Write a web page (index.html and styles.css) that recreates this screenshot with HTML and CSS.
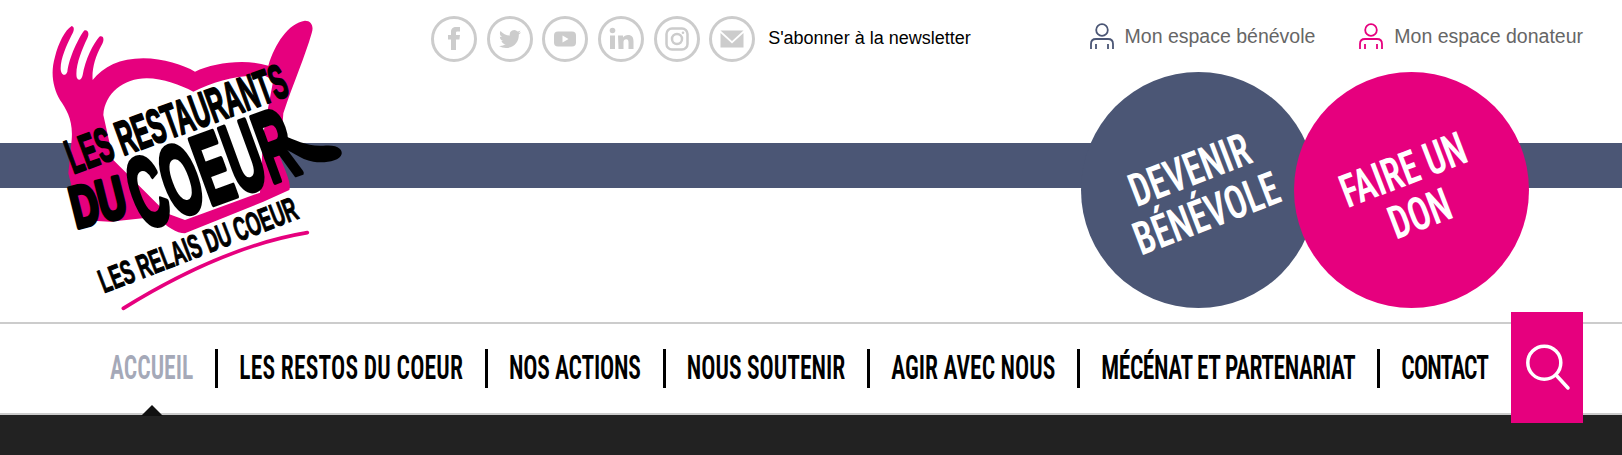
FILE: index.html
```html
<!DOCTYPE html>
<html lang="fr">
<head>
<meta charset="utf-8">
<title>Les Restaurants du Coeur</title>
<link rel="stylesheet" href="styles.css">
</head>
<body>
<div class="page">
  <header class="head">
    <div class="top">
      <div class="social">
        <a class="soc"><svg viewBox="0 0 46 46"><circle class="ring" cx="23" cy="23" r="21.5"/><path class="g" d="M20 34V23.5h-3V19h3v-3c0-3.5 2-5 5-5h4v4.5h-2.500c-1.300 0-1.500.5-1.500 1.500v2h4l-.6 4.500H25V34z"/></svg></a>
        <a class="soc"><svg viewBox="0 0 46 46"><circle class="ring" cx="23" cy="23" r="21.5"/><path class="g" transform="translate(12 12) scale(.92)" d="M23.953 4.57a10 10 0 01-2.825.775 4.958 4.958 0 002.163-2.723c-.951.555-2.005.959-3.127 1.184a4.92 4.92 0 00-8.384 4.482C7.69 8.095 4.067 6.13 1.64 3.162a4.822 4.822 0 00-.666 2.475c0 1.71.87 3.213 2.188 4.096a4.904 4.904 0 01-2.228-.616v.06a4.923 4.923 0 003.946 4.827 4.996 4.996 0 01-2.212.085 4.936 4.936 0 004.604 3.417 9.867 9.867 0 01-6.102 2.105c-.39 0-.779-.023-1.17-.067a13.995 13.995 0 007.557 2.209c9.053 0 13.998-7.496 13.998-13.985 0-.21 0-.42-.015-.63A9.935 9.935 0 0024 4.59z"/></svg></a>
        <a class="soc"><svg viewBox="0 0 46 46"><circle class="ring" cx="23" cy="23" r="21.5"/><rect class="g" x="12" y="15.500" width="22" height="15" rx="4"/><path class="w" d="M20.500 19.500v7l6-3.500z"/></svg></a>
        <a class="soc"><svg viewBox="0 0 46 46"><circle class="ring" cx="23" cy="23" r="21.500"/><circle class="g" cx="14.500" cy="14.500" r="2.800"/><path class="g" d="M12 19.500h5V33h-5zM20 19.500h5v2c1-1.500 2.800-2.400 5-2.400 4 0 5.500 2.400 5.500 6.400V33h-5v-6.700c0-1.900-.7-3-2.300-3-1.800 0-2.700 1.200-2.700 3V33h-5z"/></svg></a>
        <a class="soc"><svg viewBox="0 0 46 46"><circle class="ring" cx="23" cy="23" r="21.500"/><rect class="ln" x="12.500" y="12.500" width="21" height="21" rx="5.500"/><circle class="ln" cx="23" cy="23" r="5"/><circle class="g" cx="29" cy="16.800" r="1.300"/></svg></a>
        <a class="soc"><svg viewBox="0 0 46 46"><circle class="ring" cx="23" cy="23" r="21.500"/><path class="g" d="M11.500 14.500h23L23 25zM11.500 17V31.500h23V17L23 27.500z"/></svg></a>
        <a class="news">S'abonner à la newsletter</a>
      </div>
      <div class="accounts">
        <a class="acc"><svg class="pers blue" viewBox="0 0 24 26"><circle cx="12" cy="7" r="5.800"/><path d="M1 26v-5c0-3 2-5 5-5h12c3 0 5 2 5 5v5M6 21v5M18 21v5"/></svg>Mon espace bénévole</a>
        <a class="acc"><svg class="pers pink" viewBox="0 0 24 26"><circle cx="12" cy="7" r="5.800"/><path d="M1 26v-5c0-3 2-5 5-5h12c3 0 5 2 5 5v5M6 21v5M18 21v5"/></svg>Mon espace donateur</a>
      </div>
    </div>
    <div class="bar"></div>
    <div class="spacer"></div>

    <svg class="logo" viewBox="0 0 360 320" aria-label="Les Restaurants du Coeur">
      <g transform="translate(30 0) scale(.33333)">
        <path class="lp" d="M125 78C135 80 132 95 125 105C110 135 92 175 92 205C92 225 105 232 112 215C118 170 145 115 162 92C172 88 180 98 172 115C155 150 135 200 140 232C145 245 155 240 158 225C165 180 190 130 208 110C220 105 225 118 215 135C195 170 185 210 188 240C220 200 270 175 340 175C400 175 460 195 495 215C550 190 640 175 715 197C735 130 775 70 825 62C845 62 852 80 845 100C825 170 790 250 760 340L750 470C765 510 785 550 778 570L700 605L465 700C440 700 410 680 380 650L240 665L150 660L115 520L125 420C130 360 110 330 90 300C70 265 60 220 75 170C85 130 105 90 125 78Z"/>
        <path class="lw" d="M220 345C225 280 280 235 350 235C400 235 450 255 490 275C550 245 620 225 700 225L730 240L700 400L690 578L465 660L410 640L250 480Z"/>
        <path class="blob" d="M755 405C800 420 830 440 880 437C925 432 938 450 935 462C930 485 880 490 850 485C810 478 780 450 750 440Z"/>
        <path class="swoosh" d="M280 925C450 820 640 730 832 698"/>
        <text class="lt l1" transform="translate(130 522) rotate(-20)" textLength="695" lengthAdjust="spacingAndGlyphs">LES RESTAURANTS</text>
        <text class="lt l2" transform="translate(138 685) rotate(-14)" textLength="165" lengthAdjust="spacingAndGlyphs">DU</text>
        <text class="lt l3" transform="translate(340 690) rotate(-20)" textLength="510" lengthAdjust="spacingAndGlyphs">COEUR</text>
        <text class="lt l4" transform="translate(222 880) rotate(-21)" textLength="630" lengthAdjust="spacingAndGlyphs">LES RELAIS DU COEUR</text>
      </g>
    </svg>

    <div class="cta">
      <a class="disc d-blue"><span class="tilt">DEVENIR<br>BÉNÉVOLE</span></a>
      <a class="disc d-pink"><span class="tilt">FAIRE UN<br>DON</span></a>
    </div>
  </header>

  <nav class="nav">
    <a class="item active"><span class="lab">ACCUEIL</span></a>
    <a class="item"><span class="lab ls-a">LES RESTOS DU COEUR</span></a>
    <a class="item"><span class="lab ls-b">NOS ACTIONS</span></a>
    <a class="item"><span class="lab">NOUS SOUTENIR</span></a>
    <a class="item"><span class="lab">AGIR AVEC NOUS</span></a>
    <a class="item"><span class="lab ls-c">MÉCÉNAT ET PARTENARIAT</span></a>
    <a class="item"><span class="lab ls-d">CONTACT</span></a>
    <button class="search" aria-label="Rechercher"><svg viewBox="0 0 72 111"><circle cx="33.300" cy="50.700" r="16.500"/><path d="M45 63l12 13"/></svg></button>
  </nav>
  <div class="foot"></div>
</div>
</body>
</html>
```
FILE: styles.css
```css
* { box-sizing: border-box; }
html, body { margin: 0; padding: 0; }
body { font-family: "Liberation Sans", Arial, sans-serif; background: #fff; overflow: hidden; }
.page { width: 1622px; height: 455px; overflow: hidden; }
.head { position: relative; height: 322px; }
.top { height: 143px; display: flex; align-items: flex-start; justify-content: space-between; padding: 16px 39px 0 431px; }
.social { display: flex; align-items: center; gap: 10.700px; }
.soc { display: block; width: 45px; height: 46px; }
.soc svg { display: block; width: 46px; height: 46px; }
.ring { fill: none; stroke: #ccc; stroke-width: 3; }
.g { fill: #ccc; }
.w { fill: #fff; }
.ln { fill: none; stroke: #ccc; stroke-width: 2.500; }
.news { font-size: 18px; color: #000; margin: -2px 0 0 3px; white-space: nowrap; }
.accounts { display: flex; gap: 44px; padding-top: 7px; }
.acc { display: flex; align-items: center; gap: 11px; font-size: 19.500px; color: #666; white-space: nowrap; line-height: 26px; }
.pers { width: 24px; height: 26px; fill: none; stroke-width: 1.800; }
.pers.blue { stroke: #4b5675; }
.pers.pink { stroke: #e6007e; }
.bar { height: 45px; background: #4b5675; }
.spacer { height: 134px; }
.logo { position: absolute; left: 0; top: 0; width: 360px; height: 320px; overflow: visible; }
.lp { fill: #e6007e; }
.lw { fill: #fff; }
.blob { fill: #000; }
.swoosh { fill: none; stroke: #e6007e; stroke-width: 11; stroke-linecap: round; }
.lt { font-family: "Liberation Sans", sans-serif; font-weight: 700; fill: #000; stroke: #000; stroke-linejoin: round; }
.l1 { font-size: 145px; stroke-width: 6; }
.l2 { font-size: 175px; stroke-width: 14; }
.l3 { font-size: 300px; stroke-width: 16; }
.l4 { font-size: 100px; stroke-width: 3; }
.cta { position: absolute; right: 93px; top: 72px; display: flex; }
.disc { width: 235px; height: 236px; border-radius: 50%; display: flex; align-items: center; justify-content: center; padding-top: 3px; color: #fff; font-family: "Roboto Condensed", "Open Sans", sans-serif; font-stretch: 75%; font-weight: 600; font-size: 35.500px; line-height: 36px; text-align: center; }
.d-blue { background: #4b5675; }
.d-pink { background: #e6007e; margin-left: -22px; position: relative; }
.tilt { display: block; transform: rotate(-21deg) scaleY(1.300); white-space: nowrap; }
.nav { position: relative; height: 93px; border-top: 2px solid #ccc; border-bottom: 2px solid #ccc; display: flex; align-items: center; padding: 0 0 0 88px; }
.item { position: relative; font-family: "Roboto Condensed", "Open Sans", sans-serif; font-stretch: 75%; font-weight: 600; font-size: 23.600px; line-height: 39px; height: 39px; padding: 0 22px 0 21px; border-left: 3px solid #000; color: #000; white-space: nowrap; }
.lab { display: block; transform: scaleY(1.400); }
.ls-a { letter-spacing: .17px; }
.ls-b { letter-spacing: -.2px; }
.ls-c { letter-spacing: -.45px; }
.ls-d { letter-spacing: -.85px; }
.item.active { border-left: 0; padding-left: 22px; color: #a5a9b8; }
.item.active::after { content: ""; position: absolute; left: 50%; margin-left: -11px; bottom: -28px; border: 11px solid transparent; border-top: 0; border-bottom-color: #111; }
.search { position: absolute; right: 39px; top: -12px; width: 72px; height: 111px; border: 0; padding: 0; background: #e6007e; }
.search svg { display: block; width: 72px; height: 111px; fill: none; stroke: #fff; stroke-width: 3.500; stroke-linecap: round; }
.foot { height: 40px; background: #222; }
```
